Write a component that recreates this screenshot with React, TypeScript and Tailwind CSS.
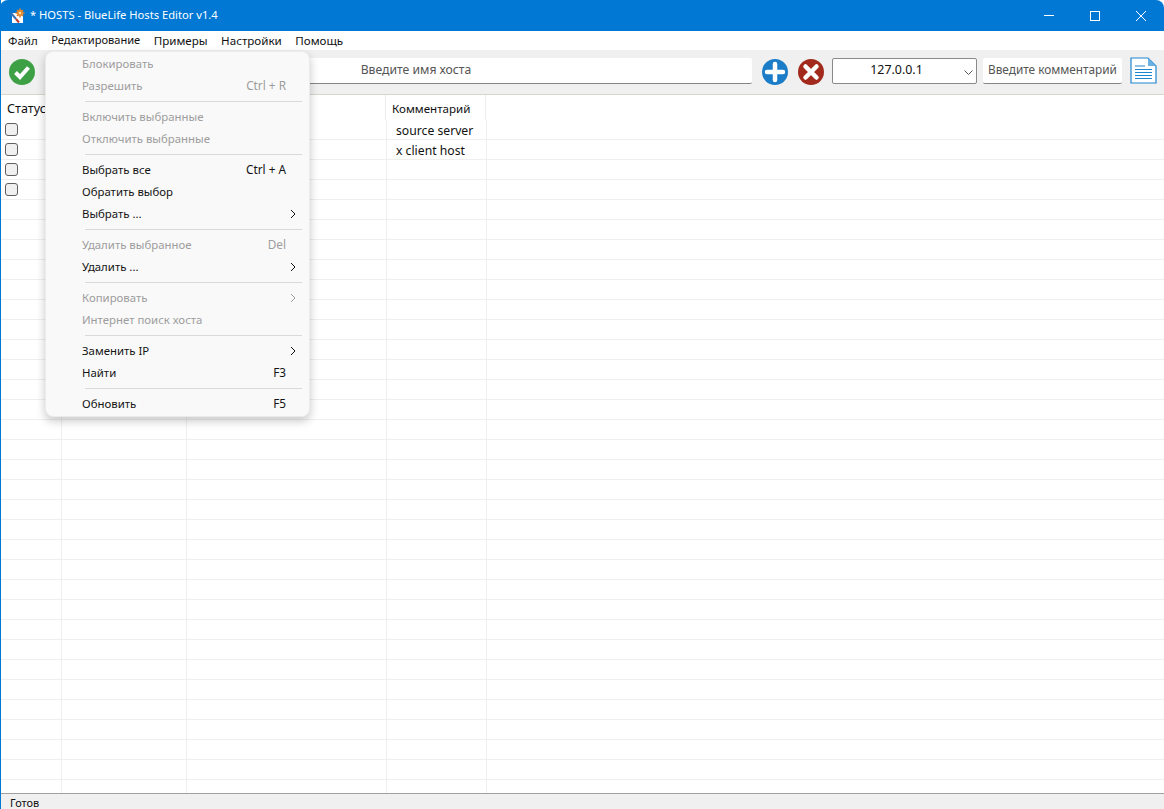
import React from 'react';

const font = "font-['Noto_Sans',sans-serif]";

type MenuEntry =
  | { sep: true }
  | { label: string; shortcut?: string; arrow?: boolean; disabled?: boolean; sep?: false };

const menuItems: MenuEntry[] = [
  { label: 'Блокировать', disabled: true },
  { label: 'Разрешить', shortcut: 'Ctrl + R', disabled: true },
  { sep: true },
  { label: 'Включить выбранные', disabled: true },
  { label: 'Отключить выбранные', disabled: true },
  { sep: true },
  { label: 'Выбрать все', shortcut: 'Ctrl + A' },
  { label: 'Обратить выбор' },
  { label: 'Выбрать ...', arrow: true },
  { sep: true },
  { label: 'Удалить выбранное', shortcut: 'Del', disabled: true },
  { label: 'Удалить ...', arrow: true },
  { sep: true },
  { label: 'Копировать', arrow: true, disabled: true },
  { label: 'Интернет поиск хоста', disabled: true },
  { sep: true },
  { label: 'Заменить IP', arrow: true },
  { label: 'Найти', shortcut: 'F3' },
  { sep: true },
  { label: 'Обновить', shortcut: 'F5' },
];

const topMenu = [
  { label: 'Файл', size: 'text-[11.5px]' },
  { label: 'Редактирование', size: 'text-[11.1px]' },
  { label: 'Примеры', size: 'text-[11.6px]' },
  { label: 'Настройки', size: 'text-[11.6px]' },
  { label: 'Помощь', size: 'text-[11.6px]' },
];

const rows = [
  { checked: true, comment: 'source server' },
  { checked: true, comment: 'x client host' },
  { checked: true, comment: '' },
  { checked: true, comment: '' },
  ...Array.from({ length: 31 }).map(() => ({ checked: false, comment: '' })),
];

// Small app icon: sheet, wand and gear
const AppIcon = () => (
  <svg width="16" height="16" viewBox="0 0 16 16" className="shrink-0">
    <rect x="2" y="5" width="11" height="10" fill="#fff" />
    <path d="M10 0.5 V9.5 M5.5 5 H14.5 M7 2 L13 8 M13 2 L7 8" stroke="#d9822b" strokeWidth="1.6" />
    <circle cx="10" cy="5" r="3" fill="#e8892b" />
    <circle cx="10" cy="5" r="1.2" fill="#f8e3b0" />
    <path d="M1 5 L6 11" stroke="#3d6fb4" strokeWidth="2" />
    <path d="M6 11 L9 14.5" stroke="#c0392b" strokeWidth="2" />
  </svg>
);

const CheckIcon = () => (
  <svg width="26" height="26" viewBox="0 0 26 26" className="shrink-0">
    <circle cx="13" cy="13" r="13" fill="#3da045" />
    <path d="M6.5 13.5 L11 18 L19.5 8.5" fill="none" stroke="#fff" strokeWidth="4" />
  </svg>
);

const PlusIcon = () => (
  <svg width="26" height="26" viewBox="0 0 26 26" className="shrink-0">
    <circle cx="13" cy="13" r="13" fill="#1b7cc8" />
    <path d="M13 5 V21 M5 13 H21" stroke="#fff" strokeWidth="4.5" strokeLinecap="round" />
  </svg>
);

const CrossIcon = () => (
  <svg width="26" height="26" viewBox="0 0 26 26" className="shrink-0">
    <circle cx="13" cy="13" r="13" fill="#a12a1c" />
    <path d="M7.5 7.5 L18.5 18.5 M18.5 7.5 L7.5 18.5" stroke="#fff" strokeWidth="4.5" strokeLinecap="round" />
  </svg>
);

const DocIcon = () => (
  <svg width="27" height="27" viewBox="0 0 27 27" className="shrink-0">
    <path d="M1 1 H18 L26 9 V26 H1 Z" fill="#fff" stroke="#1f86cf" strokeWidth="1.2" />
    <path d="M18 1 L26 9 H18 Z" fill="#6db1e4" />
    <path d="M5 9 H15 M5 12.5 H22 M5 15.5 H22 M5 18.5 H22 M5 21.5 H22" stroke="#1f86cf" strokeWidth="1" />
  </svg>
);

const ContextMenu = () => (
  <div className="absolute left-[44px] top-[51px] z-10 w-[265px] rounded-lg border border-[#ebebeb] bg-[#f9f9f9] py-[1px] shadow-[0_4px_10px_rgba(0,0,0,0.22)]">
    {menuItems.map((item, i) =>
      item.sep ? (
        <div key={i} className="flex h-[9px] items-center pl-[39px] pr-[7px]">
          <div className="h-px w-full bg-[#d9d9d9]" />
        </div>
      ) : (
        <div
          key={i}
          className={`flex h-[22px] items-center pl-[36px] text-[11.4px] ${
            item.disabled ? 'text-[#9d9d9d]' : 'text-[#141414]'
          }`}
        >
          <span className="flex-1">{item.label}</span>
          {item.shortcut && <span className="pr-[23px] text-[11.8px]">{item.shortcut}</span>}
          {item.arrow && (
            <svg width="6" height="10" viewBox="0 0 6 10" className="mr-[13px]">
              <path d="M1 1 L5 5 L1 9" fill="none" stroke="currentColor" strokeWidth="1" />
            </svg>
          )}
        </div>
      ),
    )}
  </div>
);

export default function App() {
  return (
    <div className={`${font} relative flex h-[809px] w-[1164px] flex-col overflow-hidden border-l border-[#0078d4] bg-white text-[#111]`}>
      {/* title bar */}
      <div className="-ml-px flex h-[31px] shrink-0 items-center rounded-tl-lg rounded-tr-lg bg-[#0078d4] pl-[10px] text-white">
        <AppIcon />
        <span className="ml-[4px] text-[11.2px]">* HOSTS - BlueLife Hosts Editor v1.4</span>
        <div className="ml-auto flex h-full items-center">
          <div className="flex w-[46px] justify-center">
            <div className="h-px w-[10px] bg-white" />
          </div>
          <div className="flex w-[46px] justify-center">
            <div className="h-[10px] w-[10px] border border-white" />
          </div>
          <div className="flex w-[46px] justify-center">
            <svg width="10" height="10" viewBox="0 0 10 10">
              <path d="M0 0 L10 10 M10 0 L0 10" stroke="#fff" strokeWidth="1" />
            </svg>
          </div>
        </div>
      </div>

      {/* menu bar */}
      <div className="flex h-[19px] shrink-0 items-center gap-[13.5px] pl-[7px] text-[#111]">
        {topMenu.map((m) => (
          <span key={m.label} className={m.size}>{m.label}</span>
        ))}
      </div>

      {/* toolbar */}
      <div className="flex h-[45px] shrink-0 items-center border-b border-[#d8d6cc] bg-[#f0f0f0] pl-[8px]">
        <CheckIcon />
        <div className="mb-[3px] ml-[45px] flex h-[26px] w-[672px] items-center justify-center rounded-[2px] border-b border-[#858585] bg-white text-[12.2px] text-[#555]">
          Введите имя хоста
        </div>
        <div className="ml-[10px]"><PlusIcon /></div>
        <div className="ml-[10px]"><CrossIcon /></div>
        <div className="relative mb-[3px] ml-[8px] flex h-[26px] w-[145px] items-center justify-center rounded-[2px] border border-[#8a8a8a] bg-white pr-[16px] text-[12.4px] text-[#111]">
          127.0.0.1
          <svg width="9" height="6" viewBox="0 0 9 6" className="absolute right-[3px] top-[11px]">
            <path d="M0.5 0.5 L4.5 4.5 L8.5 0.5" fill="none" stroke="#555" strokeWidth="1" />
          </svg>
        </div>
        <div className="mb-[3px] ml-[6px] flex h-[26px] w-[139px] items-center justify-center rounded-[2px] border-b border-[#858585] bg-white text-[11.8px] text-[#555]">
          Введите комментарий
        </div>
        <div className="mb-[3px] ml-[8px]"><DocIcon /></div>
      </div>

      {/* list */}
      <div className="min-h-0 flex-1 overflow-hidden text-[12.2px]">
        <div className="flex h-[25px] items-center">
          <div className="w-[60px] pl-[6px] pt-[3px] text-[12.6px]">Статус</div>
          <div className="h-full w-[125px]" />
          <div className="h-full w-[199px]" />
          <div className="flex h-full w-[101px] items-center border-x border-[#ececec] pl-[6px] pt-[3px] text-[11.6px]">Комментарий</div>
        </div>
        {rows.map((row, i) => (
          <div key={i} className="flex h-[20px] border-b border-[#efefef]">
            <div className="flex w-[61px] items-center border-r border-[#efefef] pl-[4px]">
              {row.checked && <div className="h-[13px] w-[13px] rounded-[3px] border border-[#5f5f5f] bg-[#f0f0f0]" />}
            </div>
            <div className="w-[125px] border-r border-[#efefef]" />
            <div className="w-[200px] border-r border-[#efefef]" />
            <div className="w-[100px] border-r border-[#efefef] pl-[9px] leading-[21px]">{row.comment}</div>
          </div>
        ))}
      </div>

      {/* status bar */}
      <div className="flex h-[16px] shrink-0 items-center border-t border-[#a0a0a0] bg-[#f0f0f0] pl-[9px] pt-[3px] text-[11px]">
        Готов
      </div>

      <ContextMenu />
    </div>
  );
}
